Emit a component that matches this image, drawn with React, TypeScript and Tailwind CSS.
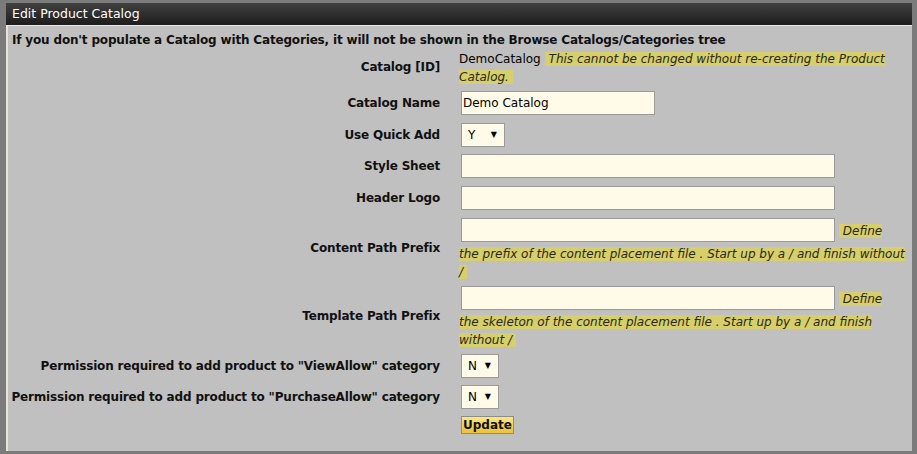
const hint = 'italic text-[#2a2a1a] bg-[#d7ce6c]';

function Select({ value, width }: { value: string; width: string }) {
  return (
    <div
      className={`${width} ml-[2px] h-6 flex items-center justify-between pl-[6px] pr-[7px] bg-[#fffbe8] border border-[#9a9a9a] text-[12px] text-black`}
    >
      <span>{value}</span>
      <span className="text-[8px] leading-none">▼</span>
    </div>
  );
}

function Label({ children }: { children: React.ReactNode }) {
  return (
    <div className="flex items-center justify-end text-right whitespace-nowrap font-bold text-[12px] tracking-[-0.17px] text-[#111]">
      {children}
    </div>
  );
}

function TextInput({ value = '', width, extra = '' }: { value?: string; width: string; extra?: string }) {
  return (
    <input
      readOnly
      value={value}
      className={`${width} ${extra} ml-[2px] h-6 px-[1px] bg-[#fffbe8] border border-[#9a9a9a] text-[12px] text-black outline-none align-middle`}
    />
  );
}

export default function App() {
  return (
    <div className="w-[917px] h-[454px] bg-[#7b7b7b] pt-[3px] pl-[6px] font-['DejaVu_Sans',Verdana,sans-serif]">
      <div className="w-[906px]">
        <div className="h-[23px] flex items-center px-[6px] bg-gradient-to-b from-[#414141] to-[#1d1d1d] border-b border-[#ecece2] text-white text-[12.5px]">
          Edit Product Catalog
        </div>
        <div className="h-[425px] bg-[#c0c0c0] border-l-2 border-[#e4e4da] pl-[4px] pt-[6px]">
          <p className="font-bold text-[12px] tracking-[-0.17px] text-[#111] leading-[16px]">
            If you don't populate a Catalog with Categories, it will not be shown in the Browse Catalogs/Categories tree
          </p>

          <div className="grid grid-cols-[428px_446px] gap-x-[19px] gap-y-[8px] mt-[2px] text-[12px] leading-[18px]">
            <Label>Catalog [ID]</Label>
            <div className="text-black -mb-[3px]">
              DemoCatalog <span className={`${hint} px-[4px]`}>This cannot be changed without re-creating the Product Catalog.</span>
            </div>

            <Label>Catalog Name</Label>
            <div>
              <TextInput value="Demo Catalog" width="w-[194px]" />
            </div>

            <Label>Use Quick Add</Label>
            <div className="-mb-[1px]">
              <Select value="Y" width="w-[44px]" />
            </div>

            <Label>Style Sheet</Label>
            <div>
              <TextInput width="w-[374px]" />
            </div>

            <Label>Header Logo</Label>
            <div>
              <TextInput width="w-[374px]" />
            </div>

            <Label>Content Path Prefix</Label>
            <div className="-mb-[3px]">
              <TextInput width="w-[374px]" extra="mb-[3px]" />{' '}
              <span className={`${hint} px-[4px]`}>
                Define the prefix of the content placement file . Start up by a / and finish without /
              </span>
            </div>

            <Label>Template Path Prefix</Label>
            <div className="-mb-[3px]">
              <TextInput width="w-[374px]" extra="mb-[3px]" />{' '}
              <span className={`${hint} px-[4px]`}>
                Define the skeleton of the content placement file . Start up by a / and finish without /
              </span>
            </div>

            <Label>Permission required to add product to "ViewAllow" category</Label>
            <div className="-mb-[1px]">
              <Select value="N" width="w-[38px]" />
            </div>

            <Label>Permission required to add product to "PurchaseAllow" category</Label>
            <div className="-mb-[1px]">
              <Select value="N" width="w-[38px]" />
            </div>

            <div />
            <div>
              <button className="ml-[2px] h-[18px] px-[1px] bg-gradient-to-b from-[#fbe782] to-[#e9c136] border border-[#8c8c8c] font-bold text-[12px] leading-none text-[#111]">
                Update
              </button>
            </div>
          </div>
        </div>
      </div>
    </div>
  );
}
